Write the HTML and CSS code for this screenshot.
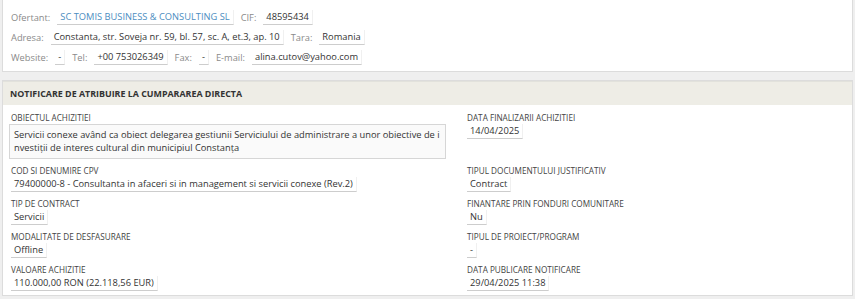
FILE: index.html
```html
<!DOCTYPE html>
<html lang="ro">
<head>
	<meta charset="UTF-8">
	<title>Notificare de atribuire</title>
	<link rel="stylesheet" href="styles.css">
</head>
<body>
	<div class="panel offer">
		<div class="line">
			<span class="key">Ofertant:</span>
			<span class="val link">SC TOMIS BUSINESS &amp; CONSULTING SL</span>
			<span class="key">CIF:</span>
			<span class="val">48595434</span>
		</div>
		<div class="line">
			<span class="key">Adresa:</span>
			<span class="val">Constanta, str. Soveja nr. 59, bl. 57, sc. A, et.3, ap. 10</span>
			<span class="key">Tara:</span>
			<span class="val">Romania</span>
		</div>
		<div class="line">
			<span class="key">Website:</span>
			<span class="val">-</span>
			<span class="key">Tel:</span>
			<span class="val">+00 753026349</span>
			<span class="key">Fax:</span>
			<span class="val">-</span>
			<span class="key">E-mail:</span>
			<span class="val">alina.cutov@yahoo.com</span>
		</div>
	</div>

	<div class="panel notice">
		<div class="notice-head">NOTIFICARE DE ATRIBUIRE LA CUMPARAREA DIRECTA</div>
		<div class="fields">
			<div class="field">
				<div class="label">OBIECTUL ACHIZITIEI</div>
				<div class="textbox">Servicii conexe având ca obiect delegarea gestiunii Serviciului de administrare a unor obiective de i nvestiții de interes cultural din municipiul Constanța</div>
			</div>
			<div class="field">
				<div class="label">DATA FINALIZARII ACHIZITIEI</div>
				<span class="val">14/04/2025</span>
			</div>
			<div class="field">
				<div class="label">COD SI DENUMIRE CPV</div>
				<span class="val">79400000-8 - Consultanta in afaceri si in management si servicii conexe (Rev.2)</span>
			</div>
			<div class="field">
				<div class="label">TIPUL DOCUMENTULUI JUSTIFICATIV</div>
				<span class="val">Contract</span>
			</div>
			<div class="field">
				<div class="label">TIP DE CONTRACT</div>
				<span class="val">Servicii</span>
			</div>
			<div class="field">
				<div class="label">FINANTARE PRIN FONDURI COMUNITARE</div>
				<span class="val">Nu</span>
			</div>
			<div class="field">
				<div class="label">MODALITATE DE DESFASURARE</div>
				<span class="val">Offline</span>
			</div>
			<div class="field">
				<div class="label">TIPUL DE PROIECT/PROGRAM</div>
				<span class="val">-</span>
			</div>
			<div class="field">
				<div class="label">VALOARE ACHIZITIE</div>
				<span class="val">110.000,00 RON (22.118,56 EUR)</span>
			</div>
			<div class="field">
				<div class="label">DATA PUBLICARE NOTIFICARE</div>
				<span class="val">29/04/2025 11:38</span>
			</div>
		</div>
	</div>
</body>
</html>
```

FILE: styles.css
```css
body {
	margin: 0;
	background-color: #efefef;
	font-family: "Open Sans", "Liberation Sans", sans-serif;
	color: #333;
}

.panel {
	background-color: #fff;
	border: 1px solid #dcdcdc;
	margin: 0 2px;
}

.offer {
	border-top: none;
	padding: 7px 8px 8px 8px;
	height: 56px;
}

.line {
	display: flex;
	align-items: center;
	gap: 7px;
	height: 20px;
	font-size: 9.3px;
}

.key {
	color: #8a8a8a;
}

.val {
	display: inline-block;
	padding: 1px 3px 1px 3px;
	border-bottom: 1px solid #cdcdcd;
	border-right: 1px solid #f0f0f0;
	font-size: 9.3px;
	line-height: 12px;
	color: #333;
	white-space: nowrap;
}

.link {
	color: #4c8dbf;
}

.notice {
	margin-top: 8px;
	height: 214px;
}

.notice-head {
	background-color: #eeede6;
	border-top: 1px solid #e2e2dc;
	padding: 6px 7px 5px 7px;
	font-size: 8.9px;
	font-weight: bold;
	line-height: 12px;
	color: #333;
}

.fields {
	display: grid;
	grid-template-columns: 458px 1fr;
	row-gap: 6px;
	padding: 7px 0 0 6px;
}

.field {
	display: flex;
	flex-direction: column;
	align-items: flex-start;
	padding-left: 2px;
}

.fields .field:nth-child(even) {
	padding-left: 0;
}

.label {
	font-size: 8.2px;
	color: #444;
	line-height: 11px;
	margin-bottom: 1px;
}

.textbox {
	margin-left: -2px;
	width: 427px;
	padding: 3px 4px 4px 4px;
	border: 1px solid #d6d6d6;
	background-color: #fafafa;
	font-size: 9.3px;
	line-height: 13px;
	color: #333;
}
```
